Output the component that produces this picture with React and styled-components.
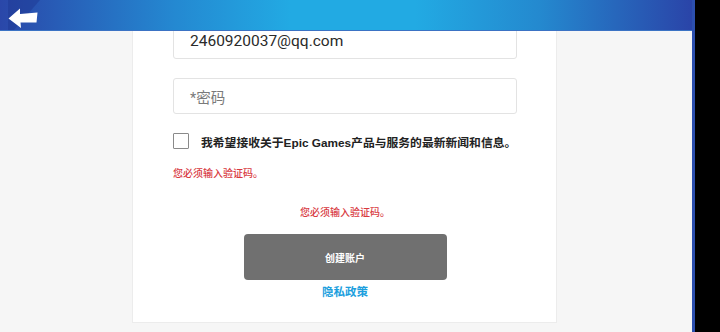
import React from "react";
import styled, { createGlobalStyle } from "styled-components";

const GlobalStyle = createGlobalStyle`
  html, body { margin: 0; padding: 0; background: #000; }
  body { font-family: Roboto, "Noto Sans CJK SC", sans-serif; }
`;

const Screen = styled.div`
  width: 720px;
  height: 332px;
  display: flex;
  overflow: hidden;
`;

const Main = styled.div`
  width: 692px;
  display: flex;
  flex-direction: column;
  background: #f6f6f6;
`;

const SideBar = styled.div`
  flex: 1;
  background: #000;
  border-left: 3px solid #2c4fae;
`;

const Header = styled.div`
  height: 30px;
  flex-shrink: 0;
  display: flex;
  align-items: center;
  background: linear-gradient(90deg, #2a47a9 0%, #2488d1 25%, #22aae3 42%, #22aae3 60%, #2489cf 78%, #2a44a8 100%);
  box-shadow: 0 1px 0 #3b73c4;
  position: relative;
  z-index: 1;
`;

const BackButton = styled.div`
  width: 42px;
  height: 30px;
  display: flex;
`;

const Body = styled.div`
  flex: 1;
  overflow: hidden;
  display: flex;
  justify-content: flex-start;
  padding-left: 132px;
`;

const Card = styled.div`
  width: 425px;
  height: 313px;
  margin-top: -20px;
  padding: 12px 39px 0 40px;
  box-sizing: border-box;
  background: #fff;
  border: 1px solid #ececec;
  display: flex;
  flex-direction: column;
`;

const Field = styled.div`
  height: 36px;
  box-sizing: border-box;
  border: 1px solid #e3e3e3;
  border-radius: 3px;
  margin-bottom: ${(p) => p.$gap || 0}px;
  display: flex;
  align-items: center;
  padding-left: 16px;
  font-size: ${(p) => (p.$placeholder ? 14.5 : 15.5)}px;
  color: ${(p) => (p.$placeholder ? "#7a7a7a" : "#2a2a2a")};
`;

const CheckRow = styled.div`
  display: flex;
  align-items: center;
  gap: 12px;
  height: 16px;
`;

const Box = styled.div`
  width: 16px;
  height: 16px;
  box-sizing: border-box;
  border: 1px solid #8a8a8a;
  border-radius: 1px;
  flex-shrink: 0;
`;

const Label = styled.span`
  font-family: "Liberation Sans", "Noto Sans CJK SC", sans-serif;
  font-size: 11.8px;
  font-weight: 700;
  color: #222;
  white-space: nowrap;
`;

const ErrorText = styled.div`
  font-size: 10px;
  line-height: 12px;
  font-weight: 500;
  color: #d83a3f;
  margin-top: ${(p) => p.$top}px;
  text-align: ${(p) => (p.$center ? "center" : "left")};
`;

const SubmitButton = styled.div`
  align-self: center;
  width: 203px;
  height: 46px;
  margin-top: 15px;
  border-radius: 4px;
  background: #707070;
  color: #fff;
  font-size: 10px;
  font-weight: 700;
  display: flex;
  align-items: center;
  justify-content: center;
`;

const PrivacyLink = styled.div`
  margin-top: 5px;
  line-height: 15px;
  text-align: center;
  font-size: 11.5px;
  font-weight: 700;
  color: #1c9fde;
`;

export default function App() {
  return (
    <Screen>
      <GlobalStyle />
      <Main>
        <Header>
          <BackButton>
            <svg width="42" height="30" viewBox="0 0 42 30">
              <polygon points="8,0 40,0 14,30 8,30" fill="#1f3a96" opacity="0.55" />
              <path d="M8.5 18.5 L20 8.5 L20 14 L37.5 12.5 L36.5 22.5 L20.5 22.5 L21 28 Z" fill="#fff" />
            </svg>
          </BackButton>
        </Header>
        <Body>
          <Card>
            <Field $gap={19}>2460920037@qq.com</Field>
            <Field $placeholder $gap={19}>*密码</Field>
            <CheckRow>
              <Box />
              <Label>我希望接收关于Epic Games产品与服务的最新新闻和信息。</Label>
            </CheckRow>
            <ErrorText $top={19}>您必须输入验证码。</ErrorText>
            <ErrorText $top={27} $center>您必须输入验证码。</ErrorText>
            <SubmitButton>创建账户</SubmitButton>
            <PrivacyLink>隐私政策</PrivacyLink>
          </Card>
        </Body>
      </Main>
      <SideBar />
    </Screen>
  );
}
